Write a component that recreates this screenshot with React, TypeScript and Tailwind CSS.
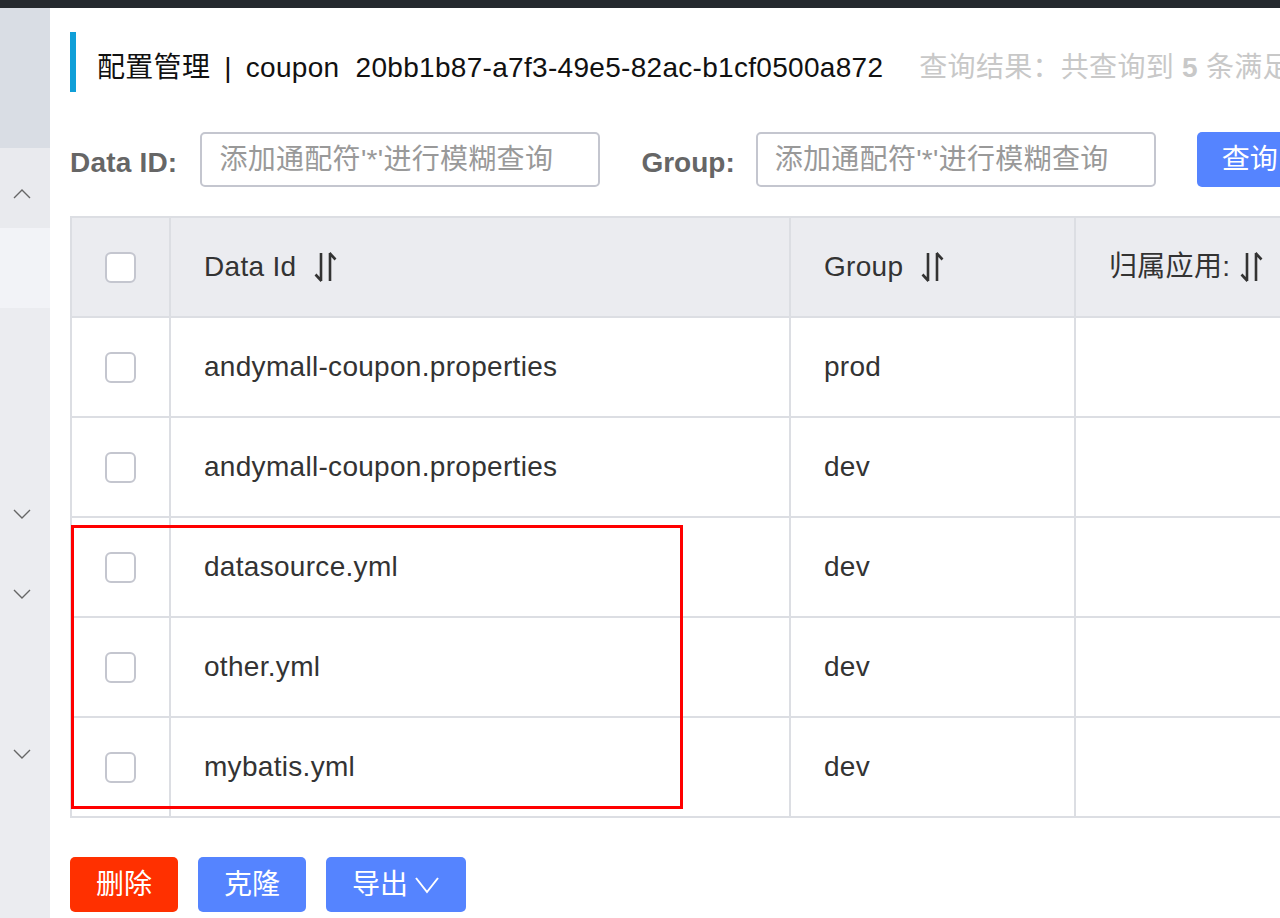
import React from 'react'

const rows = [
  { id: 'andymall-coupon.properties', group: 'prod' },
  { id: 'andymall-coupon.properties', group: 'dev' },
  { id: 'datasource.yml', group: 'dev' },
  { id: 'other.yml', group: 'dev' },
  { id: 'mybatis.yml', group: 'dev' },
]

function SortIcon() {
  return (
    <svg width="24" height="30" viewBox="0 0 24 30" fill="none" stroke="#333" strokeWidth="2.6" strokeLinecap="butt">
      <path d="M7 1 V29 M1.5 22.5 L7.5 29" />
      <path d="M16 29 V1 M15.5 1 L21.5 7.5" />
    </svg>
  )
}

function Chevron({ up = false }: { up?: boolean }) {
  return (
    <svg width="18" height="10" viewBox="0 0 18 10" fill="none" stroke="#666" strokeWidth="1.4">
      {up ? <path d="M1 9 L9 1 L17 9" /> : <path d="M1 1 L9 9 L17 1" />}
    </svg>
  )
}

function Checkbox() {
  return <div className="w-[31px] h-[31px] rounded-[6px] border-2 border-[#c4c6cf] bg-white" />
}

export default function App() {
  return (
    <div className="w-[1280px] h-[918px] overflow-hidden bg-white font-['Liberation_Sans','Noto_Sans_CJK_SC',sans-serif] flex flex-col">
      <div className="h-[8px] bg-[#25292e] shrink-0" />
      <div className="flex flex-1 min-h-0">
        {/* sidebar */}
        <div className="w-[50px] shrink-0 flex flex-col bg-[#ebecf0]">
          <div className="h-[140px] bg-[#d9dde4]" />
          <div className="h-[80px] bg-[#e9eaee] flex items-center justify-center pt-[12px] pr-[6px]">
            <Chevron up />
          </div>
          <div className="h-[80px] bg-[#f2f3f7]" />
          <div className="h-[166px]" />
          <div className="h-[80px] flex items-center justify-center pr-[6px]"><Chevron /></div>
          <div className="h-[80px] flex items-center justify-center pr-[6px]"><Chevron /></div>
          <div className="h-[80px]" />
          <div className="h-[80px] flex items-center justify-center pr-[6px]"><Chevron /></div>
        </div>

        {/* main */}
        <div className="flex-1 min-w-0 overflow-hidden pl-[20px] pt-[24px]">
          <div className="h-[60px] border-l-[6px] border-[#109fd8] pl-[21px] pt-[12px] flex items-center whitespace-nowrap text-[28px] leading-none tracking-[0.3px]">
            <span className="text-[#111] shrink-0">
              配置管理<span className="mx-[14px]">|</span>coupon&nbsp;&nbsp;20bb1b87-a7f3-49e5-82ac-b1cf0500a872
            </span>
            <span className="ml-[36px] text-[#c8c8c8] shrink-0">
              查询结果：共查询到 <b className="font-bold">5</b> 条满足要求的配置。
            </span>
          </div>

          <div className="mt-[40px] h-[55px] flex items-center whitespace-nowrap text-[28px]">
            <span className="shrink-0 font-bold text-[#666] mt-[6px] tracking-[0.2px]">Data ID:</span>
            <div className="shrink-0 ml-[23px] w-[400px] h-[55px] rounded-[5px] border-2 border-[#c4c6cf] flex items-center pl-[17px] text-[#999] tracking-[0.3px]">
              添加通配符'*'进行模糊查询
            </div>
            <span className="shrink-0 ml-[41px] font-bold text-[#666] mt-[6px]">Group:</span>
            <div className="shrink-0 ml-[21px] w-[400px] h-[55px] rounded-[5px] border-2 border-[#c4c6cf] flex items-center pl-[17px] text-[#999] tracking-[0.3px]">
              添加通配符'*'进行模糊查询
            </div>
            <button className="shrink-0 ml-[41px] w-[110px] h-[55px] rounded-[5px] bg-[#5584ff] text-white flex items-center pl-[25px]">
              查询
            </button>
          </div>

          <div className="relative mt-[29px] w-[1306px] border-t-2 border-l-2 border-[#dcdee3] text-[28px] text-[#333] tracking-[0.3px]">
            <div className="grid grid-cols-[99px_620px_285px_300px] h-[100px] bg-[#ebecf0] border-b-2 border-[#dcdee3]">
              <div className="border-r-2 border-[#dcdee3] flex items-center justify-center"><Checkbox /></div>
              <div className="border-r-2 border-[#dcdee3] flex items-center pl-[33px] gap-[18px]">
                <span>Data Id</span><SortIcon />
              </div>
              <div className="border-r-2 border-[#dcdee3] flex items-center pl-[33px] gap-[18px]">
                <span>Group</span><SortIcon />
              </div>
              <div className="flex items-center pl-[33px] gap-[10px]">
                <span>归属应用:</span><SortIcon />
              </div>
            </div>
            {rows.map((r, i) => (
              <div key={i} className="grid grid-cols-[99px_620px_285px_300px] h-[100px] border-b-2 border-[#dcdee3]">
                <div className="border-r-2 border-[#dcdee3] flex items-center justify-center"><Checkbox /></div>
                <div className="border-r-2 border-[#dcdee3] flex items-center pl-[33px]">{r.id}</div>
                <div className="border-r-2 border-[#dcdee3] flex items-center pl-[33px]">{r.group}</div>
                <div />
              </div>
            ))}
            <div className="absolute left-[-1px] top-[307px] w-[612px] h-[284px] border-[3px] border-[#ff0000] pointer-events-none" />
          </div>

          <div className="mt-[39px] flex gap-[20px] text-[28px] text-white">
            <button className="w-[108px] h-[55px] rounded-[5px] bg-[#ff3000]">删除</button>
            <button className="w-[108px] h-[55px] rounded-[5px] bg-[#5584ff]">克隆</button>
            <button className="w-[140px] h-[55px] rounded-[5px] bg-[#5584ff] flex items-center justify-center gap-[6px]">
              <span>导出</span>
              <svg width="26" height="18" viewBox="0 0 26 18" fill="none" stroke="#fff" strokeWidth="2">
                <path d="M2 2 L13 16 L24 2" />
              </svg>
            </button>
          </div>
        </div>
      </div>
    </div>
  )
}
